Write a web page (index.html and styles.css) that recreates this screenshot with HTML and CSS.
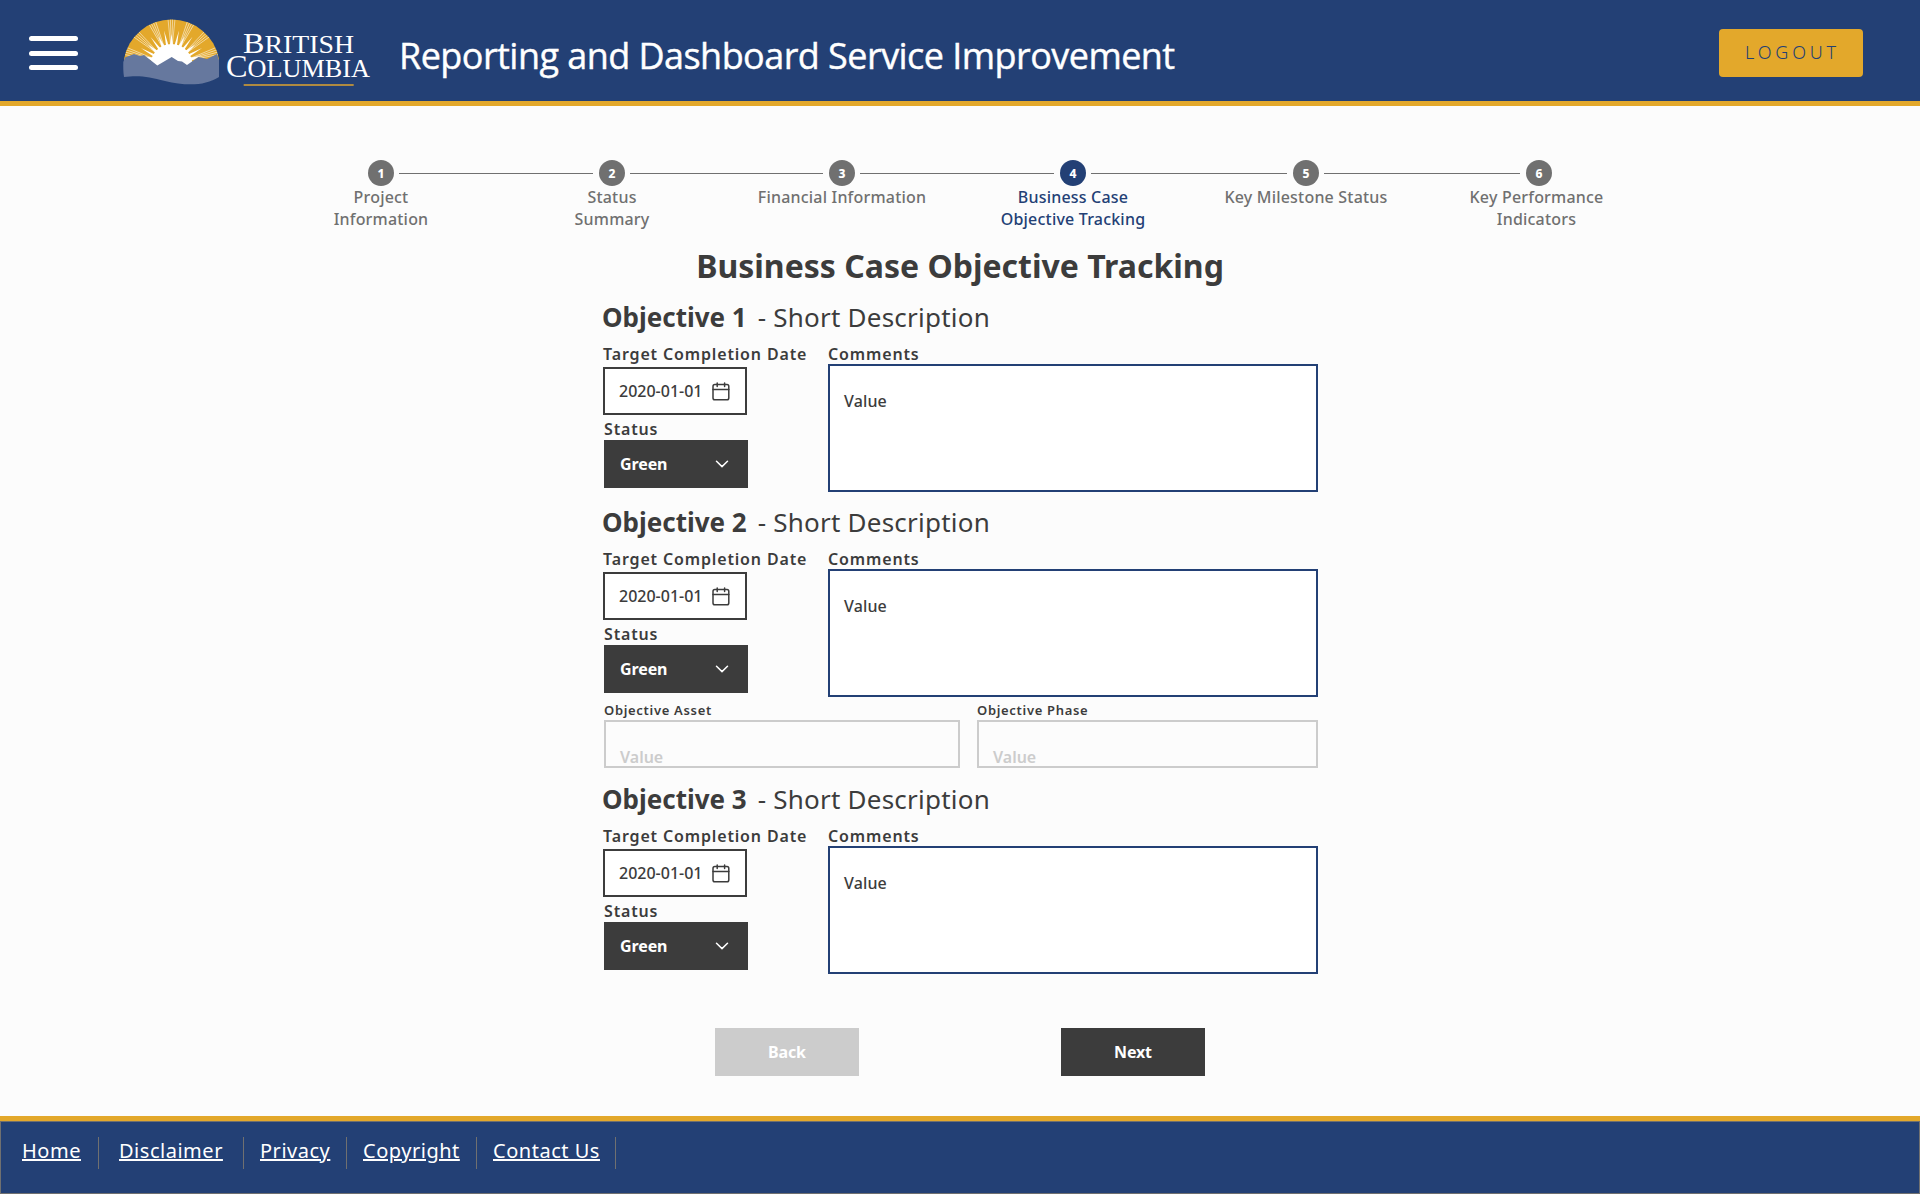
FILE: index.html
```html
<!DOCTYPE html>
<html lang="en">
<head>
<meta charset="utf-8">
<title>Reporting and Dashboard Service Improvement</title>
<link rel="stylesheet" href="styles.css">
</head>
<body>
<svg class="defs" width="0" height="0" aria-hidden="true">
  <symbol id="calendar" viewBox="0 0 18 19"><g fill="none" stroke="currentColor" stroke-width="1.5" stroke-linecap="round"><rect x="1" y="2.6" width="15.8" height="15.2" rx="1.8"/><path d="M1 7.5h15.8M5.2 1v3.400M12.600 1v3.400"/></g></symbol>
  <symbol id="chevron" viewBox="0 0 14 8"><path d="M1.5 1.2 7 6.600l5.500-5.400" fill="none" stroke="currentColor" stroke-width="1.5" stroke-linecap="round" stroke-linejoin="round"/></symbol>
</svg>
<header class="header">
  <button class="menu" aria-label="Menu"><span></span><span></span><span></span></button>
  <svg class="logo" viewBox="123 19 249 68" role="img" aria-label="British Columbia">
    <defs>
      <clipPath id="dome"><path d="M124 59A48.300 48.300 0 0 1 219 59V70H124z"/></clipPath>
      <g id="fan">
        <path d="M170.600 45 167.800 17M171.200 45 170.300 17M171.800 45 172.700 17M172.400 45 175.200 17" fill="none" stroke="#fff" stroke-width=".5"/>
        <path d="M169.800 46 171.500 34 173.200 46z" fill="#fff"/>
      </g>
      <path id="spike" d="M170.200 46 171.500 30 172.800 46z" fill="#fff"/>
    </defs>
    <g clip-path="url(#dome)">
      <path d="M123 19h97v52h-97z" fill="#e3a82b"/>
      <circle cx="171.500" cy="65" r="21" fill="#fff"/>
      <use href="#fan"/>
      <use href="#fan" transform="rotate(24.500 171.500 65)"/><use href="#fan" transform="rotate(-24.500 171.500 65)"/>
      <use href="#fan" transform="rotate(49 171.500 65)"/><use href="#fan" transform="rotate(-49 171.500 65)"/>
      <use href="#fan" transform="rotate(73 171.500 65)"/><use href="#fan" transform="rotate(-73 171.500 65)"/>
      <use href="#spike" transform="rotate(12.200 171.500 65)"/><use href="#spike" transform="rotate(-12.200 171.500 65)"/>
      <use href="#spike" transform="rotate(36.700 171.500 65)"/><use href="#spike" transform="rotate(-36.700 171.500 65)"/>
      <use href="#spike" transform="rotate(61 171.500 65)"/><use href="#spike" transform="rotate(-61 171.500 65)"/>
    </g>
    <path d="M123.300 62 125 57.500 134 54l6 2 4-1 13.300 10.500L171.700 57l6.300 4 4 .6 5 3.400 11.500-8 8.500 2 10-5 2 6V77c-14 9-33 9-54 4-16-4-25-6-41-4-.8-5-.8-10-.7-15z" fill="#66789e"/>
    <g class="wordmark" fill="#fff">
      <text x="243" y="53" textLength="111" lengthAdjust="spacingAndGlyphs"><tspan font-size="30">B</tspan><tspan font-size="26">RITISH</tspan></text>
      <text x="226" y="77" textLength="144" lengthAdjust="spacingAndGlyphs"><tspan font-size="32">C</tspan><tspan font-size="26">OLUMBIA</tspan></text>
    </g>
    <path d="M243.700 84.900h110" stroke="#af8a40" stroke-width="2"/>
  </svg>
  <h1 class="site-title">Reporting and Dashboard Service Improvement</h1>
  <button class="logout">LOGOUT</button>
</header>

<main class="main">
  <ol class="stepper">
    <li class="step"><span class="marker"><b>1</b></span><span class="step-label">Project<br>Information</span></li>
    <li class="step"><span class="marker"><b>2</b></span><span class="step-label">Status<br>Summary</span></li>
    <li class="step"><span class="marker"><b>3</b></span><span class="step-label">Financial Information</span></li>
    <li class="step current"><span class="marker"><b>4</b></span><span class="step-label">Business Case<br>Objective Tracking</span></li>
    <li class="step"><span class="marker"><b>5</b></span><span class="step-label">Key Milestone Status</span></li>
    <li class="step"><span class="marker"><b>6</b></span><span class="step-label">Key Performance<br>Indicators</span></li>
  </ol>

  <h2 class="page-title">Business Case Objective Tracking</h2>

  <form class="form">
    <section class="objective">
      <h3 class="objective-title"><b>Objective 1</b><span>- Short Description</span></h3>
      <div class="fields">
        <div class="left">
          <div class="label">Target Completion Date</div>
          <div class="date"><span>2020-01-01</span><svg class="cal"><use href="#calendar"/></svg></div>
          <div class="label status-label">Status</div>
          <div class="select"><span>Green</span><svg class="chev"><use href="#chevron"/></svg></div>
        </div>
        <div class="right">
          <div class="label comments-label">Comments</div>
          <div class="comments">Value</div>
        </div>
      </div>
    </section>

    <section class="objective">
      <h3 class="objective-title"><b>Objective 2</b><span>- Short Description</span></h3>
      <div class="fields">
        <div class="left">
          <div class="label">Target Completion Date</div>
          <div class="date"><span>2020-01-01</span><svg class="cal"><use href="#calendar"/></svg></div>
          <div class="label status-label">Status</div>
          <div class="select"><span>Green</span><svg class="chev"><use href="#chevron"/></svg></div>
        </div>
        <div class="right">
          <div class="label comments-label">Comments</div>
          <div class="comments">Value</div>
        </div>
      </div>
      <div class="extras">
        <div><div class="small-label">Objective Asset</div><div class="disabled-input">Value</div></div>
        <div><div class="small-label">Objective Phase</div><div class="disabled-input">Value</div></div>
      </div>
    </section>

    <section class="objective">
      <h3 class="objective-title"><b>Objective 3</b><span>- Short Description</span></h3>
      <div class="fields">
        <div class="left">
          <div class="label">Target Completion Date</div>
          <div class="date"><span>2020-01-01</span><svg class="cal"><use href="#calendar"/></svg></div>
          <div class="label status-label">Status</div>
          <div class="select"><span>Green</span><svg class="chev"><use href="#chevron"/></svg></div>
        </div>
        <div class="right">
          <div class="label comments-label">Comments</div>
          <div class="comments">Value</div>
        </div>
      </div>
    </section>
  </form>

  <div class="actions">
    <button class="btn btn-back" type="button">Back</button>
    <button class="btn" type="button">Next</button>
  </div>
</main>

<footer class="footer">
  <nav class="links">
    <span class="link home"><a>Home</a></span>
    <span class="link disclaimer"><a>Disclaimer</a></span>
    <span class="link privacy"><a>Privacy</a></span>
    <span class="link copyright"><a>Copyright</a></span>
    <span class="link contact"><a>Contact Us</a></span>
  </nav>
</footer>
</body>
</html>
```
FILE: styles.css
```css
* { box-sizing: border-box; }
body {
  margin: 0;
  height: 1194px;
  display: flex;
  flex-direction: column;
  background: #fcfcfc;
  color: #3c3c3c;
  font: 16px/22px "Noto Sans", sans-serif;
}
h1, h2, h3, ol { margin: 0; padding: 0; }
button { border: 0; padding: 0; font: inherit; }
.defs { position: absolute; }

.header {
  height: 106px;
  display: flex;
  align-items: flex-start;
  background: #234075;
  border-bottom: 5px solid #e3a82b;
}
.menu {
  display: flex;
  flex-direction: column;
  gap: 9.500px;
  width: 49px;
  margin: 36px 0 0 29px;
  background: none;
}
.menu span { height: 5px; border-radius: 3px; background: #fff; }
.logo { width: 249px; height: 68px; margin: 19px 0 0 45px; }
.wordmark { font-family: "Liberation Serif", serif; }
.site-title {
  margin: 30px 0 0 27px;
  font: 400 36px/52px "Open Sans", sans-serif;
  letter-spacing: -0.550px;
  -webkit-text-stroke: 0.400px #fff;
  color: #fff;
  white-space: nowrap;
}
.logout {
  width: 144px;
  height: 48px;
  margin: 29px 57px 0 auto;
  padding: 0 0 2px 3px;
  border-radius: 4px;
  background: #e3a82b;
  color: #234075;
  font: 300 18px/24px "Noto Sans", sans-serif;
  letter-spacing: 3.800px;
}

.main { flex: 1; padding-top: 54px; }
.stepper {
  display: grid;
  grid-template-columns: 231px 231px 229px 233px 233px 233px;
  width: 1390px;
  height: 70px;
  margin-left: 265px;
  list-style: none;
  color: #707070;
}
.step { display: flex; flex-direction: column; text-align: center; font-weight: 500; }
.marker { display: flex; align-items: center; height: 26px; }
.marker::before, .marker::after { content: ""; flex: 1; height: 1px; background: #707070; }
.step:first-child .marker::before, .step:last-child .marker::after { background: none; }
.marker b {
  width: 26px;
  height: 26px;
  margin: 0 5px 0 6px;
  border-radius: 50%;
  background: #707070;
  color: #fff;
  font: 800 12px/27px "Noto Sans", sans-serif;
}
.current { color: #234075; }
.current .marker b { background: #234075; }
.step-label { padding-left: 1px; letter-spacing: 0.200px; }
.step:last-child .step-label { padding-right: 5px; }

.page-title {
  margin-top: 14px;
  font-size: 32px;
  line-height: 44px;
  text-align: center;
}
.form {
  display: flex;
  flex-direction: column;
  gap: 10px;
  width: 715px;
  margin: 9px 0 0 603px;
}
.objective:last-child { margin-top: 1px; }
.objective-title {
  display: flex;
  gap: 11px;
  margin: 0 0 6px -1px;
  font-size: 26px;
  line-height: 40px;
  font-weight: 400;
  white-space: nowrap;
}
.objective-title span { letter-spacing: 0.220px; }
.fields { display: grid; grid-template-columns: 225px 490px; }
.label { font-weight: 600; letter-spacing: 0.850px; white-space: nowrap; }
.date, .select {
  display: flex;
  align-items: center;
  justify-content: space-between;
  width: 144px;
  height: 48px;
}
.date {
  margin-top: 2px;
  padding: 0 15px 0 14px;
  border: 2px solid #3c3c3c;
  background: #fff;
  font-weight: 500;
}
.cal { width: 18px; height: 19px; }
.status-label { margin: 3px 0 0 1px; }
.select {
  margin-left: 1px;
  padding: 0 19px 0 16px;
  background: #3c3c3c;
  color: #fff;
  font-weight: 700;
  letter-spacing: -0.100px;
}
.chev { width: 14px; height: 8px; }
.comments-label { margin-bottom: -1px; }
.comments {
  height: 128px;
  padding: 24px 14px;
  border: 2px solid #234075;
  background: #fff;
  font-weight: 500;
  letter-spacing: 0.150px;
}
.extras {
  display: grid;
  grid-template-columns: 356px 341px;
  gap: 17px;
  padding: 3px 0 0 1px;
}
.small-label { font-size: 13px; line-height: 20px; font-weight: 600; letter-spacing: 0.680px; }
.disabled-input {
  height: 48px;
  padding: 24px 14px 0;
  border: 2px solid #ccc;
  color: #ccc;
  font-weight: 600;
}

.actions { display: flex; gap: 202px; margin: 54px 0 0 715px; }
.btn { width: 144px; height: 48px; background: #3c3c3c; color: #fff; font-weight: 700; letter-spacing: -0.150px; }
.btn-back { background: #ccc; }

.footer {
  height: 78px;
  background: #234075;
  border-top: 5px solid #e3a82b;
}
.links { display: flex; height: 73px; padding-top: 15px; border: 1px solid #707070; }
.link {
  height: 32px;
  padding-left: 16px;
  border-right: 1px solid #707070;
  color: #fff;
  font-size: 20px;
  line-height: 27px;
  letter-spacing: 0.520px;
  white-space: nowrap;
}
.link a { text-decoration: underline; }
.home { width: 98px; padding-left: 21px; }
.disclaimer { width: 145px; padding-left: 20px; }
.privacy { width: 103px; }
.copyright { width: 130px; }
.contact { width: 139px; }
```
